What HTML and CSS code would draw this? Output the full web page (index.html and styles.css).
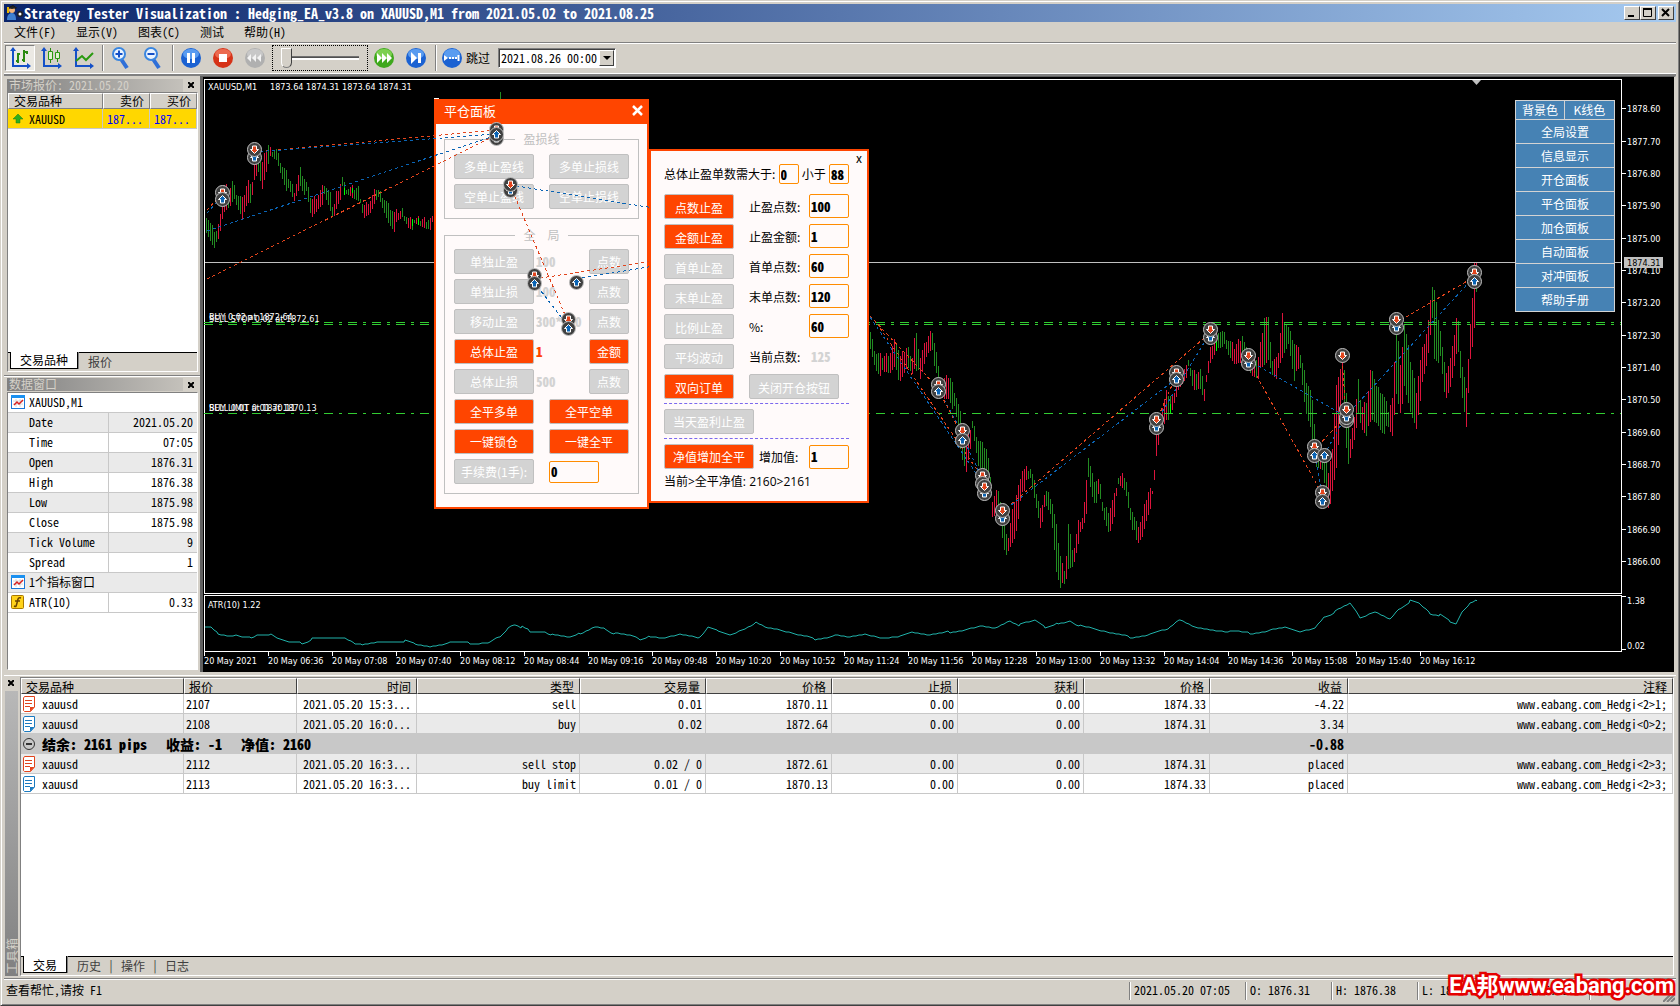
FILE: index.html
```html
<!DOCTYPE html>
<html lang="zh-CN">
<head>
<meta charset="utf-8">
<title>Strategy Tester Visualization</title>
<link rel="stylesheet" href="styles.css">
</head>
<body>
<div class="window">
  <header class="titlebar">
    <svg class="app-icon" width="20" height="18" viewBox="0 0 20 18"><path d="M3 4l6-3 4 3-5 2z" fill="#111"/><circle cx="8" cy="6" r="3" fill="#f0b27a"/><path d="M3 4l6-2 4 2-5 1z" fill="#222"/><path d="M3 16c0-5 2-7 5-7s4 3 4 7z" fill="#3f7fd0"/><path d="M4 3v6" stroke="#e8b500" stroke-width="2"/><circle cx="16" cy="10" r="3" fill="#222"/><circle cx="16" cy="10" r="1.500" fill="#fff"/></svg>
    <h1>Strategy Tester Visualization : Hedging_EA_v3.8 on XAUUSD,M1 from 2021.05.02 to 2021.08.25</h1>
    <div class="win-buttons">
      <button aria-label="Minimize"><svg width="14" height="12"><path d="M3 9h6" stroke="#000" stroke-width="2"/></svg></button>
      <button aria-label="Maximize"><svg width="14" height="12"><path d="M2.500 2v7.500h8V2M2 2h9" fill="none" stroke="#000"/><path d="M2 2h9" stroke="#000" stroke-width="2"/></svg></button>
      <button class="close" aria-label="Close"><svg width="14" height="12"><path d="M3 2l7 7M10 2l-7 7" stroke="#000" stroke-width="2"/></svg></button>
    </div>
  </header>
  <nav class="menubar">
    <a href="#">文件(F)</a><a href="#">显示(V)</a><a href="#">图表(C)</a><a href="#">测试</a><a href="#">帮助(H)</a>
  </nav>
  <div class="toolbar">
    <button class="tool pressed" aria-label="Bars"><svg width="24" height="24" viewBox="0 0 24 24"><path d="M5 3v17h16" fill="none" stroke="#1450c8" stroke-width="2"/><path d="M5 1l3 4H2zM23 20l-4-3v6z" fill="#1450c8"/><path d="M10 7v10M8 15h2M10 8h2M16 4v12M14 14h2M16 6h3M19 5v3" fill="none" stroke="#2a8a10" stroke-width="2"/></svg></button>
    <button class="tool" aria-label="Candles"><svg width="24" height="24" viewBox="0 0 24 24"><path d="M5 3v17h16" fill="none" stroke="#1450c8" stroke-width="2"/><path d="M5 1l3 4H2zM23 20l-4-3v6z" fill="#1450c8"/><path d="M11.500 2v3M11.500 14v3M18.500 4v2M18.500 13v3" stroke="#2a8a10"/><path d="M9.500 5.500h4v8h-4zM16.500 6.500h4v6h-4z" fill="#dff0d0" stroke="#2a9a10"/></svg></button>
    <button class="tool" aria-label="Line"><svg width="24" height="24" viewBox="0 0 24 24"><path d="M5 3v17h16" fill="none" stroke="#1450c8" stroke-width="2"/><path d="M5 1l3 4H2zM23 20l-4-3v6z" fill="#1450c8"/><path d="M5 15l6-5 4 4 7-7" fill="none" stroke="#2a9a10" stroke-width="2"/></svg></button>
    <i class="sep"></i>
    <button class="tool" aria-label="Zoom in"><svg width="24" height="24" viewBox="0 0 24 24"><path d="M12 13l6 9" stroke="#2f6fd8" stroke-width="4"/><circle cx="10" cy="8" r="6" fill="#eaf4ff" stroke="#3a86e0" stroke-width="2"/><path d="M6.500 8h7M10 4.500v7" stroke="#1450c8" stroke-width="2"/></svg></button>
    <button class="tool" aria-label="Zoom out"><svg width="24" height="24" viewBox="0 0 24 24"><path d="M12 13l6 9" stroke="#2f6fd8" stroke-width="4"/><circle cx="10" cy="8" r="6" fill="#eaf4ff" stroke="#3a86e0" stroke-width="2"/><path d="M6.500 8h7" stroke="#1450c8" stroke-width="2"/></svg></button>
    <i class="sep"></i>
    <button class="tool" aria-label="Pause"><svg width="24" height="24" viewBox="0 0 24 24"><circle cx="12" cy="12" r="10" fill="#1b62d2"/><ellipse cx="12" cy="8" rx="8" ry="5" fill="#5a9cf0"/><path d="M9.500 7v10M14.500 7v10" stroke="#fff" stroke-width="3"/></svg></button>
    <button class="tool" aria-label="Stop"><svg width="24" height="24" viewBox="0 0 24 24"><circle cx="12" cy="12" r="10" fill="#d63318"/><ellipse cx="12" cy="8" rx="8" ry="5" fill="#ec6a50"/><path d="M8 8h8v8H8z" fill="#fff"/></svg></button>
    <button class="tool" aria-label="Slower"><svg width="24" height="24" viewBox="0 0 24 24"><circle cx="12" cy="12" r="10" fill="#b0b0b0"/><ellipse cx="12" cy="8" rx="8" ry="5" fill="#c8c8c8"/><path d="M8 8v8l-4-4zM13 8v8l-4-4zM18 8v8l-4-4z" fill="#f4f4f4"/></svg></button>
    <input class="speed" type="range" min="0" max="30" value="0" aria-label="Speed">
    <button class="tool" aria-label="Faster"><svg width="24" height="24" viewBox="0 0 24 24"><circle cx="12" cy="12" r="10" fill="#3fa81c"/><ellipse cx="12" cy="8" rx="8" ry="5" fill="#7cd050"/><path d="M5 7v10l5-5zM10 7v10l5-5zM15 7v10l5-5z" fill="#fff"/></svg></button>
    <button class="tool" aria-label="Step"><svg width="24" height="24" viewBox="0 0 24 24"><circle cx="12" cy="12" r="10" fill="#1b62d2"/><ellipse cx="12" cy="8" rx="8" ry="5" fill="#5a9cf0"/><path d="M7 6v12l6-6z" fill="#fff"/><path d="M15.500 7v10" stroke="#fff" stroke-width="3"/></svg></button>
    <i class="sep"></i>
    <button class="skip"><svg width="24" height="24" viewBox="0 0 24 24"><circle cx="12" cy="12" r="10" fill="#1b62d2"/><ellipse cx="12" cy="8" rx="8" ry="5" fill="#5a9cf0"/><path d="M4 9v6l4-3z" fill="#fff"/><path d="M9 12h2M12 12h2M15 12h2M18.500 9v6" stroke="#fff" stroke-width="2"/></svg>跳过</button>
    <div class="combo"><select aria-label="跳过"><option>2021.08.26 00:00</option></select><span class="arrow"><svg width="8" height="4"><path d="M0 0h8l-4 4z"/></svg></span></div>
  </div>

  <main class="workspace">
    <aside class="dock">
      <section class="dock-panel">
        <header class="dock-title"><h2>市场报价: 2021.05.20</h2><button aria-label="Close"><svg width="6" height="6"><path d="M0 0l6 6M6 0L0 6" stroke="#000" stroke-width="2"/></svg></button></header>
        <div class="dock-box">
          <table class="quotes">
            <colgroup><col><col class="price"><col class="price"></colgroup>
            <thead><tr><th>交易品种</th><th>卖价</th><th>买价</th></tr></thead>
            <tbody><tr><td><svg width="10" height="10"><path d="M5 0l5 5H7v4H3V5H0z" fill="#2fae1e" stroke="#1d7d10" stroke-width=".5"/></svg>XAUUSD</td><td>187...</td><td>187...</td></tr></tbody>
          </table>
          <div class="tabs"><button class="tab active">交易品种</button><button class="tab">报价</button></div>
        </div>
      </section>
      <section class="dock-panel data">
        <header class="dock-title"><h2>数据窗口</h2><button aria-label="Close"><svg width="6" height="6"><path d="M0 0l6 6M6 0L0 6" stroke="#000" stroke-width="2"/></svg></button></header>
        <div class="dock-box">
          <table class="values">
            <colgroup><col class="name"><col></colgroup>
            <tr><th colspan="2"><svg width="14" height="14"><use href="#chart-icon"/></svg>XAUUSD,M1</th></tr>
            <tr><th>Date</th><td>2021.05.20</td></tr>
            <tr><th>Time</th><td>07:05</td></tr>
            <tr><th>Open</th><td>1876.31</td></tr>
            <tr><th>High</th><td>1876.38</td></tr>
            <tr><th>Low</th><td>1875.98</td></tr>
            <tr><th>Close</th><td>1875.98</td></tr>
            <tr><th>Tick Volume</th><td>9</td></tr>
            <tr><th>Spread</th><td>1</td></tr>
            <tr><th colspan="2"><svg width="14" height="14"><use href="#chart-icon"/></svg>1个指标窗口</th></tr>
            <tr><th><svg width="14" height="14" viewBox="0 0 14 14"><rect x=".5" y=".5" width="12" height="13" rx="1" fill="#ffd21a" stroke="#a87800"/><path d="M10 3c-3-1-3 1-4 5s-1 4-3 3M4 6h5" fill="none" stroke="#6b4400" stroke-width="1.500"/></svg>ATR(10)</th><td>0.33</td></tr>
          </table>
        </div>
      </section>
    </aside>

    <section class="chart">
      <svg class="layer" id="prices" viewBox="203 77 1471 595" preserveAspectRatio="xMinYMin meet"></svg>

      <form class="panel close-panel">
        <header><h2>平仓面板</h2><button type="button" aria-label="Close"><svg width="12" height="12"><path d="M1 1l9 9M10 1l-9 9" stroke="#fff" stroke-width="2.500"/></svg></button></header>
        <fieldset><legend>盈损线</legend>
          <div class="line"><button type="button" class="b80">多单止盈线</button><button type="button" class="b80">多单止损线</button></div>
          <div class="line"><button type="button" class="b80">空单止盈线</button><button type="button" class="b80">空单止损线</button></div>
        </fieldset>
        <fieldset class="global"><legend>全　局</legend>
          <div class="line"><button type="button" class="b80">单独止盈</button><output>100</output><button type="button" class="b40">点数</button></div>
          <div class="line"><button type="button" class="b80">单独止损</button><output>100</output><button type="button" class="b40">点数</button></div>
          <div class="line"><button type="button" class="b80">移动止盈</button><output>300*100</output><button type="button" class="b40">点数</button></div>
          <div class="line"><button type="button" class="b80 on">总体止盈</button><output class="on">1</output><button type="button" class="b40 on">金额</button></div>
          <div class="line"><button type="button" class="b80">总体止损</button><output>500</output><button type="button" class="b40">点数</button></div>
          <div class="line"><button type="button" class="b80 on">全平多单</button><button type="button" class="b80 on">全平空单</button></div>
          <div class="line"><button type="button" class="b80 on">一键锁仓</button><button type="button" class="b80 on">一键全平</button></div>
          <div class="line fee"><button type="button" class="b80">手续费(1手):</button><input value="0" aria-label="手续费"></div>
        </fieldset>
      </form>

      <svg class="layer" id="trades" viewBox="203 77 1471 595" preserveAspectRatio="xMinYMin meet"></svg>

      <form class="panel profit-panel">
        <button type="button" class="x">x</button>
        <div class="range"><label for="gt">总体止盈单数需大于:</label><input id="gt" value="0"><label for="lt">小于</label><input id="lt" value="88"></div>
        <div class="grid">
          <button type="button" class="on">点数止盈</button><label for="p1">止盈点数:</label><input id="p1" value="100">
          <button type="button" class="on">金额止盈</button><label for="p2">止盈金额:</label><input id="p2" value="1">
          <button type="button">首单止盈</button><label for="p3">首单点数:</label><input id="p3" value="60">
          <button type="button">末单止盈</button><label for="p4">末单点数:</label><input id="p4" value="120">
          <button type="button">比例止盈</button><label for="p5">%:</label><input id="p5" value="60">
          <button type="button">平均波动</button><span>当前点数:</span><output>125</output>
          <button type="button" class="on">双向订单</button><button type="button" class="b90">关闭开仓按钮</button>
        </div>
        <div class="dashed"><button type="button" class="b90">当天盈利止盈</button></div>
        <div class="net"><button type="button" class="b90 on">净值增加全平</button><label for="p6">增加值:</label><input id="p6" value="1"></div>
        <p>当前&gt;全平净值: 2160&gt;2161</p>
      </form>

      <nav class="side-menu">
        <button>背景色</button><button>K线色</button>
        <button class="wide">全局设置</button><button class="wide">信息显示</button><button class="wide">开仓面板</button><button class="wide">平仓面板</button><button class="wide">加仓面板</button><button class="wide">自动面板</button><button class="wide">对冲面板</button><button class="wide">帮助手册</button>
      </nav>
    </section>
  </main>

  <section class="terminal">
    <aside class="strip"><button aria-label="Close"><svg width="6" height="6"><path d="M0 0l6 6M6 0L0 6" stroke="#000" stroke-width="2"/></svg></button><h2><span>工具箱</span></h2></aside>
    <div class="terminal-box">
      <table class="orders">
        <colgroup><col class="w163"><col class="w113"><col class="w120"><col class="w163"><col class="w126"><col class="w126"><col class="w126"><col class="w126"><col class="w126"><col class="w138"><col></colgroup>
        <thead><tr><th>交易品种</th><th>报价</th><th>时间</th><th>类型</th><th>交易量</th><th>价格</th><th>止损</th><th>获利</th><th>价格</th><th>收益</th><th>注释</th></tr></thead>
        <tbody>
          <tr><td><svg width="12" height="16"><use href="#doc" color="#e2441c"/></svg>xauusd</td><td>2107</td><td>2021.05.20 15:3...</td><td>sell</td><td>0.01</td><td>1870.11</td><td>0.00</td><td>0.00</td><td>1874.33</td><td>-4.22</td><td>www.eabang.com_Hedgi&lt;2&gt;1;</td></tr>
          <tr><td><svg width="12" height="16"><use href="#doc" color="#1a7ac0"/></svg>xauusd</td><td>2108</td><td>2021.05.20 16:0...</td><td>buy</td><td>0.02</td><td>1872.64</td><td>0.00</td><td>0.00</td><td>1874.31</td><td>3.34</td><td>www.eabang.com_Hedgi&lt;0&gt;2;</td></tr>
          <tr class="balance"><td colspan="9"><svg width="12" height="12"><circle cx="6" cy="6" r="5.500" fill="none" stroke="#333"/><path d="M3 6h6" stroke="#333" stroke-width="2"/></svg><b>结余: 2161 pips</b><b>收益: -1</b><b>净值: 2160</b></td><td>-0.88</td><td></td></tr>
          <tr><td><svg width="12" height="16"><use href="#doc" color="#e2441c"/></svg>xauusd</td><td>2112</td><td>2021.05.20 16:3...</td><td>sell stop</td><td>0.02 / 0</td><td>1872.61</td><td>0.00</td><td>0.00</td><td>1874.31</td><td>placed</td><td>www.eabang.com_Hedgi&lt;2&gt;3;</td></tr>
          <tr><td><svg width="12" height="16"><use href="#doc" color="#1a7ac0"/></svg>xauusd</td><td>2113</td><td>2021.05.20 16:3...</td><td>buy limit</td><td>0.01 / 0</td><td>1870.13</td><td>0.00</td><td>0.00</td><td>1874.33</td><td>placed</td><td>www.eabang.com_Hedgi&lt;2&gt;3;</td></tr>
        </tbody>
      </table>
      <div class="tabs"><button class="tab active">交易</button><button class="tab">历史</button><i>|</i><button class="tab">操作</button><i>|</i><button class="tab">日志</button></div>
    </div>
  </section>

  <footer class="status">
    <span class="help">查看帮忙,请按 F1</span>
    <span class="time">2021.05.20 07:05</span><span>O: 1876.31</span><span>H: 1876.38</span><span>L: 1875.98</span><span>C: 1875.98</span><span>V: 9</span>
    <svg class="grip" width="12" height="12"><path d="M12 0L0 12M12 4l-8 8M12 8l-4 4" stroke="#808080" stroke-width="2"/></svg>
    <div class="brand">EA邦www.eabang.com</div>
  </footer>
</div>

<svg class="defs" width="0" height="0">
  <symbol id="chart-icon" viewBox="0 0 14 14"><rect x=".5" y=".5" width="13" height="13" fill="#fff" stroke="#1a78d8"/><path d="M0 1.500h14" stroke="#1a90f0" stroke-width="3"/><path d="M2 6h10M2 9h10M5 4v8M9 4v8" stroke="#d8d8d8"/><path d="M3 10l3-3 2 2 4-4" fill="none" stroke="#d82020" stroke-width="1.500"/></symbol>
  <symbol id="doc" viewBox="0 0 12 16"><path d="M.5 2l1-1.500h10V11l-4 4.500H1.500l-1-1z" fill="#fff" stroke="currentColor"/><path d="M2 4.500h7M2 7.500h7M2 10.500h5" stroke="currentColor"/><path d="M7 15.500V11h4.500z" fill="currentColor"/></symbol>
</svg>
<script src="chart.js"></script>
</body>
</html>
```
FILE: styles.css
```css
* { box-sizing: border-box; }
body {
  margin: 0;
  background: #d4d0c8;
  color: #000;
  font: 12px/16px "Noto Sans CJK SC", sans-serif;
  font-feature-settings: "hwid";
}
h1, h2, p { margin: 0; font: inherit; }
button, input, select { margin: 0; padding: 0; font: inherit; font-feature-settings: inherit; color: inherit; border: 0; background: none; border-radius: 0; }
a { color: inherit; text-decoration: none; }
svg { display: block; }
table { border-collapse: separate; border-spacing: 0; table-layout: fixed; width: 100%; }
.defs { position: absolute; }

.window {
  display: grid;
  grid-template-rows: 18px 22px 30px minmax(0, 601fr) minmax(0, 303fr) 24px;
  grid-template-columns: minmax(0, 1fr);
  height: 100vh;
  min-height: 900px;
  padding: 3px;
  border: 1px solid #d4d0c8;
  border-right-color: #404040;
  border-bottom-color: #404040;
  box-shadow: inset 1px 1px #fff, inset -1px -1px #808080;
}

/* title bar */
.titlebar { display: flex; align-items: center; padding: 0 2px 0 0; color: #fff; background: linear-gradient(90deg, #0a246a, #a6caf0); }
.titlebar h1 { flex: 1; font-size: 14px; line-height: 18px; font-weight: 700; white-space: nowrap; }
.win-buttons { display: flex; }
.win-buttons button { width: 16px; height: 14px; background: #d4d0c8; border: 1px solid; border-color: #fff #404040 #404040 #fff; overflow: hidden; }
.win-buttons .close { margin-left: 2px; }

.menubar { display: flex; gap: 20px; padding: 2px 10px; border-bottom: 1px solid #fff; box-shadow: inset 0 -1px #808080; }

/* toolbar */
.toolbar { display: flex; align-items: center; padding: 0 0 1px 1px; border-bottom: 1px solid #fff; }
.tool { display: flex; align-items: center; justify-content: center; width: 32px; height: 26px; }
.tool.pressed { width: 30px; background: #ebe9e4; border: 1px solid; border-color: #808080 #fff #fff #808080; }
.sep { width: 2px; height: 26px; margin: 0 1px 0 3px; background: #808080; border-right: 1px solid #fff; }
.speed { appearance: none; width: 96px; height: 26px; margin: 0 0 0 1px; padding: 0 8px; border: 1px dotted #000; }
.speed::-webkit-slider-runnable-track { height: 20px; background: linear-gradient(#808080, #404040) 0 8px / 100% 2px no-repeat, linear-gradient(#fff, #fff) 0 10px / 100% 2px no-repeat; }
.speed::-webkit-slider-thumb { appearance: none; width: 11px; height: 20px; background: #d4d0c8; border: 1px solid; border-color: #fff #404040 #808080 #fff; border-radius: 0 0 6px 6px; }
.skip { display: flex; align-items: center; height: 26px; padding-left: 2px; }
.skip svg { margin-right: 2px; }
.combo { display: grid; width: 118px; height: 20px; margin-left: 8px; background: #fff; border: 1px solid; border-color: #808080 #fff #fff #808080; box-shadow: inset 1px 1px #404040; }
.combo select { grid-area: 1 / 1; appearance: none; padding-left: 2px; }
.combo .arrow { grid-area: 1 / 1; justify-self: end; display: flex; align-items: center; justify-content: center; width: 15px; margin: 1px; background: #d4d0c8; border: 1px solid; border-color: #fff #404040 #404040 #fff; pointer-events: none; }

/* workspace */
.workspace { display: flex; min-height: 0; padding-bottom: 3px; border-top: 2px solid #808080; }
.dock { display: flex; flex-direction: column; width: 196px; flex: none; }
.dock-panel { display: flex; flex-direction: column; flex: 299 1 0; min-height: 0; padding: 2px 2px 3px 3px; border-bottom: 1px solid #808080; }
.dock-panel.data { flex-grow: 297; border-top: 1px solid #fff; padding: 1px 2px 2px 3px; border-bottom: 0; }
.dock-title { display: flex; align-items: center; height: 14px; }
.dock-title h2 { flex: 1; height: 13px; line-height: 11px; padding-left: 2px; color: #d4d0c8; background: linear-gradient(90deg, #808080, #c4c1bb); }
.dock-title button { width: 15px; padding-left: 5px; }
.dock-box { display: flex; flex-direction: column; flex: 1; min-height: 0; background: #fff; border: 1px solid; border-color: #808080 #fff #fff #808080; }
.price { width: 47px; }
.quotes { flex: none; }
.quotes th { height: 16px; padding: 0 5px; font-weight: 400; text-align: right; background: #d4d0c8; border: 1px solid; border-color: #fff #808080 #808080 #fff; line-height: 14px; }
.quotes th:first-child { text-align: left; }
.quotes td { height: 20px; padding: 0 6px 0 0; text-align: right; color: #00f; background: #ffd700; border-right: 1px solid #c8c8c8; border-bottom: 1px solid #c8c8c8; }
.quotes td:first-child { display: flex; align-items: center; gap: 6px; padding-left: 5px; color: #000; }
.tabs { display: flex; margin-top: auto; height: 19px; background: #d4d0c8; border-top: 1px solid #000; color: #404040; }
.tab { height: 17px; line-height: 15px; padding: 0 10px; }
.tab.active { margin: -1px 0 0 2px; padding: 0 9px; color: #000; background: #fff; border: 1px solid #000; border-top: 0; box-shadow: 1px 0 #808080; }
.name { width: 101px; }
.values th, .values td { height: 20px; padding: 0 4px 0 21px; font-weight: 400; text-align: left; border-bottom: 1px solid #c8c8c8; white-space: nowrap; }
.values td { text-align: right; }
.values th:not([colspan]) { border-right: 1px solid #c8c8c8; }
.values tr:nth-child(even) { background: #eaeaea; }
.values svg { float: left; margin: 1px 0 0 -18px; }

/* chart */
.chart { position: relative; flex: 1; min-width: 0; overflow: hidden; background: #000; border: solid #606060; border-width: 1px 2px 0 3px; border-right-color: #d4d0c8; }
.layer { position: absolute; inset: 0; width: 100%; height: 100%; }
.layer text { font: 9px "DejaVu Sans Condensed", "Liberation Sans", sans-serif; fill: #fff; font-feature-settings: normal; }
#trades { pointer-events: none; }
.panel { position: absolute; background: #fffafa; border: 2px solid #ff4500; font-feature-settings: normal; }
.panel button, .side-menu button { white-space: nowrap; }
.close-panel { left: 231px; top: 22px; width: 215px; padding: 0 8px 13px; }
.close-panel header { display: flex; align-items: center; justify-content: space-between; height: 23px; margin: 0 -8px; padding: 0 3px 3px 8px; color: #fff; background: #ff4500; font-size: 13px; }
.close-panel fieldset { min-width: 0; margin: 7px 0 0; padding: 7px 9px 9px; border: 1px solid #c0c0c0; }
.close-panel .global { margin-top: 8px; padding-top: 6px; }
.close-panel legend { margin: 0 auto; width: 53px; text-align: center; color: #c0c0c0; }
.line { display: flex; justify-content: space-between; margin-bottom: 5px; }
.line:last-child { margin-bottom: 0; }
.line button, .grid button, .dashed button, .net button { height: 25px; color: #fff; background: #d3d3d3; border: 1px solid #c0c0c0; border-radius: 2px; }
.b80 { width: 80px; }
.b40 { width: 40px; }
.grid .b90, .b90 { width: 90px; }
.panel button.on { background: #ff4500; }
.panel output, .panel input { font-size: 13px; font-weight: 900; font-feature-settings: "hwid"; }
.line output { flex: 1; padding-left: 2px; line-height: 25px; color: #d3d3d3; }
.line output.on { color: #ff4500; }
.panel input { width: 40px; height: 24px; padding-left: 1px; background: #fffafa; border: 1px solid #ff8c00; border-radius: 2px; }
.fee { align-items: center; }
.fee input { width: 50px; height: 22px; margin-right: 30px; }
.profit-panel { left: 446px; top: 72px; width: 220px; height: 354px; padding: 0 18px 0 13px; }
.profit-panel .x { display: block; margin: 0 -16px 0 auto; width: 12px; height: 13px; line-height: 9px; }
.range { display: flex; justify-content: space-between; align-items: center; height: 20px; }
.panel .range input { width: 20px; height: 20px; }
.grid { display: grid; grid-template-columns: 70px 45px 40px; column-gap: 15px; row-gap: 5px; margin-top: 10px; line-height: 25px; white-space: nowrap; }
.grid .b90 { grid-column: 2 / 4; }
.grid output { padding-left: 2px; color: #d3d3d3; line-height: 25px; }
.dashed { margin-top: 4px; padding: 5px 0 4px; border: dashed #7b68ee; border-width: 1px 0; }
.net { display: flex; align-items: center; margin-top: 5px; }
.net label { flex: 1; padding-left: 5px; }
.profit-panel p { margin-top: 5px; font-family: "Open Sans", "Noto Sans CJK SC", sans-serif; }
.side-menu { position: absolute; top: 23px; right: 59px; display: grid; grid-template-columns: 49px 51px; width: 100px; font-feature-settings: normal; color: #fff; }
.side-menu button { height: 20px; background: #4682b4; border: 1px solid #d3d3d3; line-height: 18px; }
.side-menu button:first-child { border-right: 0; }
.side-menu .wide { grid-column: 1 / 3; height: 24px; border-top: 0; line-height: 22px; }

/* terminal */
.terminal { display: flex; min-height: 0; padding: 1px 2px 2px 1px; border-top: 1px solid #fff; }
.strip { display: flex; flex-direction: column; width: 14px; flex: none; margin-right: 1px; }
.strip button { height: 12px; padding: 0 0 0 3px; margin-bottom: 2px; }
.strip h2 { display: flex; flex: 1; align-items: flex-end; justify-content: center; width: 13px; padding-bottom: 2px; color: #d4d0c8; background: linear-gradient(#b8b8b8, #808080); }
.strip span { writing-mode: vertical-rl; text-orientation: sideways; transform: rotate(180deg); line-height: 13px; }
.terminal-box { display: flex; flex-direction: column; flex: 1; min-width: 0; background: #fff; border: 1px solid; border-color: #808080 #fff #fff #808080; }
.w163 { width: 163px; } .w113 { width: 113px; } .w120 { width: 120px; } .w126 { width: 126px; } .w138 { width: 138px; }
.orders { flex: none; }
.orders th { height: 16px; line-height: 13px; padding: 0 5px 0 4px; font-weight: 400; text-align: right; background: #d4d0c8; border: 1px solid; border-color: #fff #404040 #404040 #fff; }
.orders th:nth-child(-n+2) { text-align: left; }
.orders td { height: 20px; padding: 0 3px 0 2px; text-align: right; white-space: nowrap; border-right: 1px solid #c8c8c8; border-bottom: 1px solid #c8c8c8; }
.orders td:nth-child(-n+2) { text-align: left; }
.orders td:nth-child(3), .orders td:last-child { padding-right: 5px; }
.orders tbody tr:nth-child(even) { background: #eaeaea; }
.orders td svg { float: left; margin-right: 7px; }
.orders tbody .balance { background: #c8c8c8; font-size: 14px; font-weight: 700; }
.orders .balance td { border-right: 0; line-height: 18px; }
.orders .balance td:nth-child(2) { text-align: right; padding-right: 4px; }
.balance svg { margin-top: 3px; }
.balance b { margin-right: 19px; }
.terminal .tabs i { font-style: normal; width: 0; text-indent: -3px; }

/* status bar */
.status { position: relative; display: flex; align-items: center; padding: 1px 1px 0 2px; border-top: 1px solid #808080; box-shadow: inset 0 1px #fff; white-space: nowrap; }
.status span { flex: none; width: 86px; height: 18px; padding-left: 4px; border-left: 1px solid #808080; box-shadow: inset 1px 0 #fff; }
.status .help { flex: 1; padding: 0; border: 0; box-shadow: none; }
.status .time { width: 116px; }
.grip { align-self: flex-end; margin-left: -12px; }
.brand {
  position: absolute; right: 2px; bottom: 1px;
  color: #fff; font: 700 22px/30px Roboto, "Noto Sans CJK SC", sans-serif; font-feature-settings: normal;
  -webkit-text-stroke: 5px #e60000; paint-order: stroke fill;
}
```
FILE: chart.js
```js
const NS = "http://www.w3.org/2000/svg";
const prices = document.getElementById("prices");
const trades = document.getElementById("trades");

function add(parent, name, attrs, text) {
  const el = document.createElementNS(NS, name);
  for (const key in attrs) el.setAttribute(key, attrs[key]);
  if (text) el.textContent = text;
  parent.appendChild(el);
  return el;
}
function path(parent, d, stroke, extra) {
  add(parent, "path", Object.assign({ d, stroke, fill: "none", "shape-rendering": "crispEdges" }, extra));
}

// [x, high, low] of the one-minute bars; bars between the samples are interpolated
const left = [[206,215,233],[213,230,243],[217,230,247],[220,217,233],[223,185,213],[230,187,203],[231,179,195],[236,193,208],[242,200,219],[247,182,200],[252,181,199],[254,163,183],[258,160,173],[262,163,188],[265,153,173],[268,145,160],[270,149,160],[276,150,161],[282,166,177],[288,177,192],[294,190,202],[300,169,184],[306,183,195],[311,200,220],[318,194,207],[324,184,198],[330,195,212],[333,210,219],[336,193,207],[342,178,190],[345,188,196],[358,188,197],[363,207,221],[370,200,212],[376,188,196],[382,195,210],[388,205,222],[394,213,228],[402,210,218],[408,219,226],[420,219,227],[434,218,226]];
const right = [[870,333,350],[875,353,368],[883,357,375],[890,352,373],[895,339,363],[900,357,385],[907,347,367],[912,357,372],[915,330,363],[920,357,382],[927,337,353],[932,330,347],[936,353,377],[940,383,400],[949,375,397],[955,393,412],[961,417,457],[966,443,470],[972,421,432],[978,440,467],[987,449,470],[992,500,520],[998,488,513],[1004,527,547],[1008,537,555],[1014,500,540],[1017,492,527],[1021,470,490],[1030,468,480],[1034,483,498],[1040,510,525],[1045,490,507],[1051,498,517],[1056,527,570],[1061,563,587],[1065,570,587],[1068,525,570],[1073,553,565],[1078,523,540],[1083,517,530],[1087,463,510],[1088,457,477],[1093,480,500],[1099,480,497],[1103,507,518],[1109,510,533],[1114,495,513],[1118,477,487],[1125,476,490],[1130,505,517],[1137,527,547],[1142,517,537],[1147,493,515],[1153,487,495],[1156,433,458],[1160,415,433],[1166,393,417],[1172,397,413],[1178,377,390],[1188,363,370],[1193,372,392],[1200,370,387],[1204,387,397],[1210,350,365],[1217,330,347],[1222,332,343],[1228,340,357],[1234,347,363],[1242,335,357],[1248,357,370],[1252,360,375],[1258,357,375],[1264,317,367],[1268,319,360],[1272,360,373],[1277,360,375],[1282,315,360],[1288,328,343],[1294,343,377],[1300,353,370],[1305,377,410],[1311,393,427],[1316,440,470],[1322,450,470],[1328,470,505],[1332,450,495],[1336,383,470],[1343,360,387],[1345,377,437],[1349,440,467],[1355,413,437],[1358,377,413],[1361,410,427],[1367,400,433],[1371,363,422],[1376,387,423],[1382,393,430],[1388,410,430],[1392,400,437],[1396,317,393],[1400,367,410],[1404,323,390],[1410,360,413],[1416,390,427],[1421,353,390],[1427,330,363],[1432,285,317],[1434,290,357],[1440,330,360],[1445,373,402],[1451,357,383],[1457,310,343],[1461,360,393],[1466,390,427],[1470,323,357],[1473,287,337],[1476,263,297]];

function bars(samples) {
  let up = "", down = "";
  for (let i = 0; i < samples.length - 1; i++) {
    const [x0, h0, l0] = samples[i], [x1, h1, l1] = samples[i + 1];
    for (let x = Math.ceil(x0 / 2) * 2; x < x1; x += 2) {
      const t = (x - x0) / (x1 - x0);
      const wob = ((x * 37) % 11) - 5;
      const h = Math.round(h0 + (h1 - h0) * t + wob * 0.6), l = Math.round(l0 + (l1 - l0) * t + ((x * 23) % 9) - 4);
      const seg = `M${x + 0.5} ${h}V${l}`;
      if (h1 + l1 - h0 - l0 + wob * 3 < 0) up += seg; else down += seg;
    }
  }
  path(prices, down, "#228b22");
  path(prices, up, "#dc143c");
}
bars(left);
bars(right);
path(prices, "M500.500 92v8M1476.500 262v30", "#228b22");
path(prices, "M1474.500 262v36M1476.500 262v10", "#dc143c");
path(prices, "M344.500 188v7M352.500 188v5M412.500 219v7M418.500 218v7M1170.500 404v9M1216.500 341v10", "#00ff00");

// frames and scales
path(prices, "M204.500 593.500V79.500H1621.500V593.500ZM204.500 651.500V595.500H1621.500V651.500Z", "#fff");
path(prices, "M205 262.500H1621", "#c0c0c0");
const dashes = { "stroke-dasharray": "9 6 3 6" };
for (const y of [322.5, 324.5, 413.5]) path(prices, `M204 ${y}H1621`, "#32cd32", dashes);
add(prices, "path", { d: "M1472 80h9l-4.500 5z", fill: "#c0c0c0" });

const levels = [108, 141, 173, 205, 238, 270, 302, 335, 367, 399, 432, 464, 496, 529, 561];
levels.forEach((y, i) => {
  path(prices, `M1622 ${y + 0.5}h4`, "#fff");
  add(prices, "text", { x: 1627, y: y + 4 }, (1878.6 - i * 0.9).toFixed(2));
});
add(prices, "rect", { x: 1624, y: 257, width: 39, height: 11, fill: "#c0c0c0" });
add(prices, "text", { x: 1627, y: 266, style: "fill:#000" }, "1874.31");
path(prices, "M1622 596.500h4M1622 649.500h4", "#fff");
add(prices, "text", { x: 1627, y: 604 }, "1.38");
add(prices, "text", { x: 1627, y: 649 }, "0.02");

for (let i = 0; i < 20; i++) {
  const x = 204 + i * 64, m = 364 + i * 32;
  path(prices, `M${x + 0.5} 652v4`, "#fff");
  const time = i ? `${String(Math.floor(m / 60)).padStart(2, "0")}:${String(m % 60).padStart(2, "0")}` : "2021";
  add(prices, "text", { x, y: 664 }, "20 May " + time);
}
add(prices, "text", { x: 208, y: 90 }, "XAUUSD,M1");
add(prices, "text", { x: 270, y: 90 }, "1873.64 1874.31 1873.64 1874.31");
add(prices, "text", { x: 208, y: 608 }, "ATR(10) 1.22");
add(prices, "text", { x: 209, y: 320 }, "BUY 0.02 at 1872.64");
add(prices, "text", { x: 209, y: 322 }, "SELL STOP 0.02 at 1872.61");
add(prices, "text", { x: 209, y: 411 }, "SELL 0.01 at 1870.11");
add(prices, "text", { x: 209, y: 411 }, "BUY LIMIT 0.01 at 1870.13");

// ATR samples, with the small steps of the indicator between them
const atr = "205,627 211,627 218,633 230,635 236,634 244,637 251,637 257,634 271,634 277,638 283,640 291,643 302,643 312,639 345,639 355,644 362,644 377,641 405,641 415,644 430,647 450,643 470,643 490,642 500,636 508,628 515,624 522,627 530,631 545,631 552,635 570,638 580,634 595,627 605,628 615,634 630,636 640,640 650,636 665,637 680,633 700,637 708,628 718,631 730,635 745,629 756,623 765,628 780,631 795,635 815,639 835,635 850,637 865,634 880,638 900,637 912,633 930,636 950,632 965,629 980,625 995,627 1010,620 1020,625 1035,621 1045,628 1058,623 1070,620 1080,626 1095,630 1110,634 1130,637 1150,634 1170,628 1180,620 1195,627 1210,630 1230,632 1250,633 1270,630 1285,627 1300,632 1315,628 1325,616 1335,612 1350,604 1360,618 1375,612 1390,619 1400,608 1410,601 1420,604 1430,613 1440,615 1450,622 1456,624 1462,612 1470,604 1477,601".split(" ").map(p => p.split(",").map(Number));
const atrPoints = [];
for (let i = 0; i < atr.length - 1; i++) {
  const [x0, y0] = atr[i], [x1, y1] = atr[i + 1];
  for (let x = x0; x < x1; x += 3) atrPoints.push(`${x},${Math.round(y0 + (y1 - y0) * (x - x0) / (x1 - x0)) + ((x * 7) % 3) - 1}`);
}
atrPoints.push("1477,601");
add(prices, "polyline", { points: atrPoints.join(" "), fill: "none", stroke: "#20b2aa" });

// deals: dashed connectors, then the entry and exit markers
const RED = "#e2441c", BLUE = "#0a64b4";
const links = [
  [RED,254,152,496,130],[BLUE,254,152,496,134],[BLUE,207,231,494,136],[RED,207,279,494,136],[RED,207,210,222,194],[BLUE,207,213,222,196],
  [BLUE,510,185,660,209],[RED,510,185,568,322],[RED,534,279,660,260],[BLUE,576,279,660,265],[BLUE,534,282,568,326],
  [RED,870,316,938,388],[RED,880,328,984,480],[BLUE,870,317,982,482],[BLUE,938,389,962,432],[RED,938,389,962,435],[BLUE,962,436,984,482],
  [RED,1002,512,1210,333],[BLUE,1002,512,1176,379],[BLUE,1156,422,1210,333],[RED,1156,422,1176,376],
  [BLUE,1248,360,1340,413],[RED,1248,360,1322,494],[RED,1342,360,1346,412],[RED,1314,450,1346,416],[BLUE,1324,455,1346,416],[BLUE,1315,455,1322,496],
  [RED,1396,323,1474,277],[BLUE,1346,416,1474,277]
];
for (const [stroke, x1, y1, x2, y2] of links) path(trades, `M${x1} ${y1}L${x2} ${y2}`, stroke, { "stroke-dasharray": "3 3" });

const marks = "u254,157 d254,149 d222,192 u222,199 d496,129 u496,138 u496,134 u510,190 d510,184 d534,275 u534,283 u576,282 d568,319 u568,328 d938,384 u938,391 d962,430 u962,440 d982,475 u982,483 u984,493 d984,486 u1002,518 d1002,510 u1156,427 d1156,419 d1176,372 u1176,379 u1210,337 d1210,329 u1248,363 d1248,355 d1342,355 u1346,420 u1346,417 d1346,409 d1314,446 u1314,455 u1324,455 d1322,492 u1322,501 u1396,327 d1396,319 d1474,272 u1474,281";
for (const mark of marks.split(" ")) {
  const up = mark[0] === "u";
  const [x, y] = mark.slice(1).split(",");
  const g = add(trades, "g", { transform: `translate(${+x + 0.5} ${+y + 0.5})` });
  add(g, "circle", { r: 7, fill: "#404040", stroke: "#c0c0c0" });
  add(g, "path", { d: up ? "M0-4L4 0H2V3.500H-2V0H-4Z" : "M0 4L4 0H2V-3.500H-2V0H-4Z", fill: up ? BLUE : RED, stroke: "#fff", "stroke-width": 1 });
}
path(prices, "M434.500 103v-4.500h4", "#fff");
```
